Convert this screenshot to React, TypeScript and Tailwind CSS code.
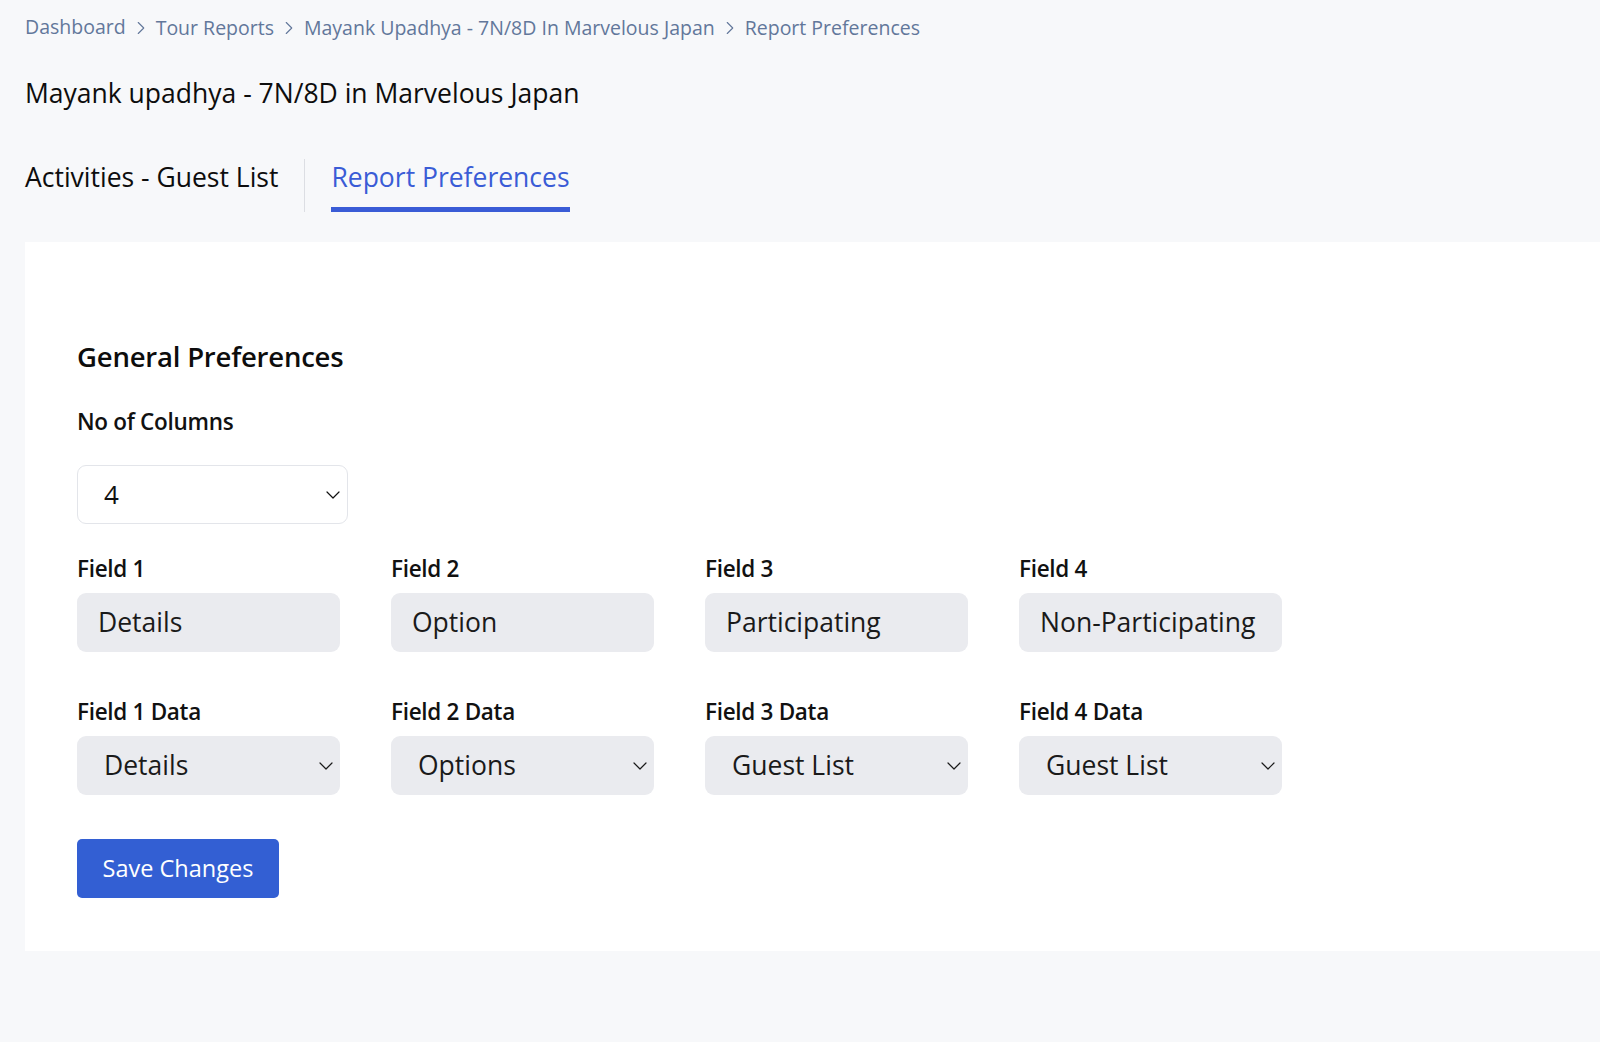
import { ChevronDown, ChevronRight } from 'lucide-react';

const crumbs = ['Dashboard', 'Tour Reports', 'Mayank Upadhya - 7N/8D In Marvelous Japan', 'Report Preferences'];

const fields = [
  { label: 'Field 1', value: 'Details', dataLabel: 'Field 1 Data', data: 'Details' },
  { label: 'Field 2', value: 'Option', dataLabel: 'Field 2 Data', data: 'Options' },
  { label: 'Field 3', value: 'Participating', dataLabel: 'Field 3 Data', data: 'Guest List' },
  { label: 'Field 4', value: 'Non-Participating', dataLabel: 'Field 4 Data', data: 'Guest List' },
];

function Label({ children }: { children: React.ReactNode }) {
  return <div className="text-[22.5px] font-semibold leading-[30px] tracking-[-0.3px] text-[#111]">{children}</div>;
}

export default function App() {
  return (
    <div className="min-h-screen bg-[#f7f8fa] pl-[25px] pt-[14px] text-[#111]" style={{ fontFamily: '"Open Sans", "Noto Sans", sans-serif' }}>
      {/* breadcrumb */}
      <nav className="flex items-center gap-[4px] text-[19.5px] leading-[28px] text-[#62779a]">
        {crumbs.map((c, i) => (
          <span key={c} className="flex items-center gap-[4px]">
            <span className={i === 0 ? '-mt-[3px]' : ''}>{c}</span>
            {i < crumbs.length - 1 && <ChevronRight size={22} strokeWidth={1.2} className="text-[#62779a]" />}
          </span>
        ))}
      </nav>

      <h1 className="mt-[34px] text-[26.5px] font-medium leading-[34px] text-[#0d0d0d]">Mayank upadhya - 7N/8D in Marvelous Japan</h1>

      {/* tabs */}
      <div className="mt-[49px] flex items-stretch">
        <button type="button" className="flex flex-col items-start text-[26.5px] font-medium leading-[36px] text-[#0d0d0d]">
          <span className="pb-[13px]">Activities - Guest List</span>
        </button>
        <div className="mx-[26px] w-px bg-[#dcdee3]" />
        <button type="button" className="flex flex-col items-start text-[26.5px] font-medium leading-[36px] text-[#3a5cd6]">
          <span className="pb-[12px]">Report Preferences</span>
          <span className="h-[5px] w-full bg-[#3a5cd6]" />
        </button>
      </div>

      {/* card */}
      <section className="mt-[30px] bg-white pb-[53px] pl-[52px] pt-[96px]">
        <h2 className="text-[27.5px] font-semibold leading-[38px] tracking-[-0.2px] text-[#0d0d0d]">General Preferences</h2>

        <div className="mt-[31px]">
          <Label>No of Columns</Label>
          <div className="mt-[28px] flex h-[59px] w-[271px] items-center justify-between rounded-[9px] border border-[#e3e5ea] bg-white pl-[26px] pr-[2px] text-[26px]">
            <span>4</span>
            <ChevronDown size={24} strokeWidth={1.2} />
          </div>
        </div>

        <div className="mt-[30px] grid w-fit grid-cols-[repeat(4,263px)] gap-x-[51px]">
          {fields.map((f) => (
            <div key={f.label}>
              <Label>{f.label}</Label>
              <div className="mt-[9px] flex h-[59px] items-center rounded-[9px] bg-[#eaebef] pl-[21px] text-[26.5px] text-[#1a1a1a]">
                {f.value}
              </div>
            </div>
          ))}
        </div>

        <div className="mt-[45px] grid w-fit grid-cols-[repeat(4,263px)] gap-x-[51px]">
          {fields.map((f) => (
            <div key={f.dataLabel}>
              <Label>{f.dataLabel}</Label>
              <div className="mt-[9px] flex h-[59px] items-center justify-between rounded-[9px] bg-[#eaebef] pl-[27px] pr-[2px] text-[26.5px] text-[#1a1a1a]">
                <span>{f.data}</span>
                <ChevronDown size={24} strokeWidth={1.2} />
              </div>
            </div>
          ))}
        </div>

        <button
          type="button"
          className="mt-[44px] h-[59px] w-[202px] rounded-[5px] bg-[#335fd3] text-[23.5px] text-white"
        >
          Save Changes
        </button>
      </section>
    </div>
  );
}
